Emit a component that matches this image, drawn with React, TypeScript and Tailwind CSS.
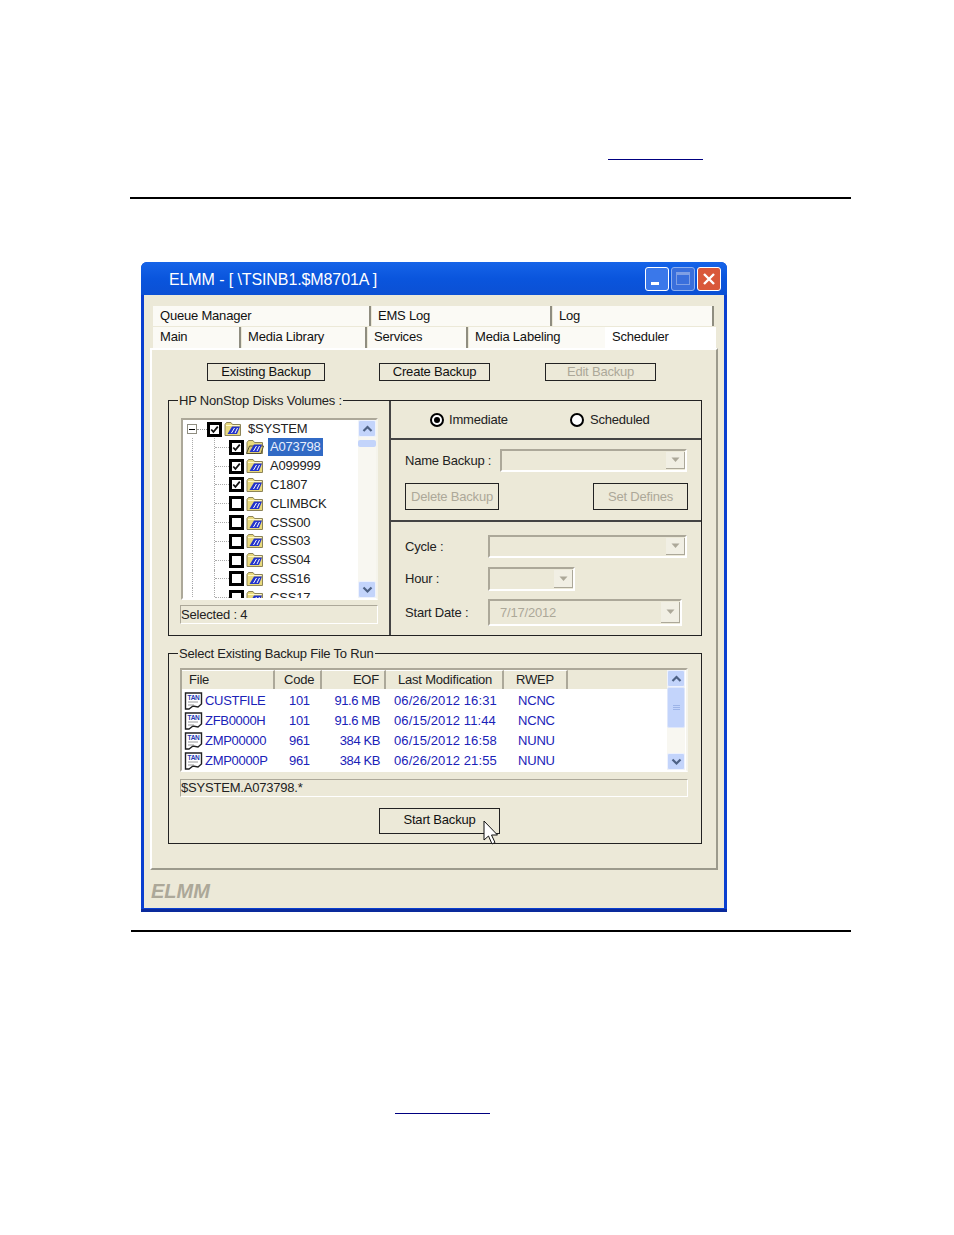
// App.tsx
// ELMM backup scheduler window, as shown on a scanned manual page.
const font = "font-['Liberation_Sans',Arial,sans-serif]";

const volumes = [
	{ name: "A073798", checked: true, selected: true },
	{ name: "A099999", checked: true },
	{ name: "C1807", checked: true },
	{ name: "CLIMBCK" },
	{ name: "CSS00" },
	{ name: "CSS03" },
	{ name: "CSS04" },
	{ name: "CSS16" },
	{ name: "CSS17" },
];

const files = [
	{ file: "CUSTFILE", code: "101", eof: "91.6 MB", date: "06/26/2012 16:31", rwep: "NCNC" },
	{ file: "ZFB0000H", code: "101", eof: "91.6 MB", date: "06/15/2012 11:44", rwep: "NCNC" },
	{ file: "ZMP00000", code: "961", eof: "384 KB", date: "06/15/2012 16:58", rwep: "NUNU" },
	{ file: "ZMP0000P", code: "961", eof: "384 KB", date: "06/26/2012 21:55", rwep: "NUNU" },
];

function Folder({ open }: { open?: boolean }) {
	return (
		<svg width="18" height="16" viewBox="0 0 18 16" className="shrink-0">
			<path d="M1 3.5 L2.5 1.5 H7 L8.5 3.5 H16.5 V14.5 H1 Z" fill="#e8d97c" stroke="#8d8458" strokeWidth="1" />
			{open ? (
				<path d="M0.5 14.5 L3.5 7 H17.5 L15 14.5 Z" fill="#dccb74" stroke="#555030" strokeWidth="1" />
			) : (
				<path d="M2 4.5 H15.5" stroke="#fff8c8" strokeWidth="1" />
			)}
			<path d="M3.5 13 L8 5.5 H16 L13 13 Z" fill="#2233cc" />
			<path d="M7.5 12 L10.5 7 M11 12 L13.5 7" stroke="#ffffff" strokeWidth="1" />
		</svg>
	);
}

function Check({ checked }: { checked?: boolean }) {
	return (
		<span className="w-[15px] h-[15px] border-[3px] border-black bg-white shrink-0 flex items-center justify-center">
			{checked && (
				<svg width="9" height="9" viewBox="0 0 11 11">
					<path d="M1.5 5.5 L4.2 8.5 L9.5 2" fill="none" stroke="#111" strokeWidth="2.2" />
				</svg>
			)}
		</span>
	);
}

function Chevron({ down }: { down?: boolean }) {
	return (
		<svg width="11" height="8" viewBox="0 0 11 8">
			<path d={down ? "M1.5 1.5 L5.5 5.5 L9.5 1.5" : "M1.5 6 L5.5 2 L9.5 6"} fill="none" stroke="#4d6185" strokeWidth="2.2" />
		</svg>
	);
}

function ScrollBtn({ down }: { down?: boolean }) {
	return (
		<div className="h-[17px] shrink-0 rounded-[2px] bg-[#c3d4fb] border border-[#eef2fd] flex items-center justify-center">
			<Chevron down={down} />
		</div>
	);
}

function Combo({ width, height, text }: { width: string; height: string; text?: string }) {
	return (
		<div className={`${width} ${height} flex border-2 border-t-[#aca899] border-l-[#aca899] border-r-white border-b-white`}>
			<span className="flex-1 pl-[10px] text-[13px] flex items-center text-[#aca899]">{text}</span>
			<span className="w-[19px] m-px mr-0 bg-[#f1efe4] border-r border-b border-[#aca899] flex items-center justify-center">
				<svg width="9" height="6" viewBox="0 0 9 6">
					<path d="M0.5 0.5 H8.5 L4.5 5 Z" fill="#aca899" />
				</svg>
			</span>
		</div>
	);
}

function Btn({ label, className, disabled }: { label: string; className: string; disabled?: boolean }) {
	return (
		<div
			className={`${className} shrink-0 border border-[#222] flex items-center justify-center text-[13px] tracking-[-0.2px] whitespace-nowrap ${
				disabled ? "text-[#aca899]" : "text-[#111]"
			}`}
		>
			{label}
		</div>
	);
}

function Radio({ on }: { on?: boolean }) {
	return (
		<span className="w-[14px] h-[14px] rounded-full border-2 border-black bg-white flex items-center justify-center shrink-0">
			{on && <span className="w-[6px] h-[6px] rounded-full bg-black" />}
		</span>
	);
}

function FileIcon() {
	return (
		<svg width="19" height="19" viewBox="0 0 19 19" className="shrink-0">
			<path d="M1.5 1 H17.5 V12 L14 15 L9 14 L5 17 H1.5 Z" fill="#fff" stroke="#222" strokeWidth="1.4" />
			<path d="M4 10 H14 M4 13 H10" stroke="#999" strokeWidth="1" />
			<text x="9.5" y="7.5" textAnchor="middle" fontSize="6.5" fontWeight="700" fill="#2438b0" fontFamily="Liberation Sans">
				TAN
			</text>
		</svg>
	);
}

function Th({ label, className }: { label: string; className: string }) {
	return (
		<div className={`${className} h-full shrink-0 flex items-center whitespace-nowrap border-r-2 border-r-[#aca899] border-t border-t-white text-[13px] tracking-[-0.2px] text-[#222]`}>
			{label}
		</div>
	);
}

export default function App() {
	return (
		<div className={`${font} w-[954px] h-[1235px] bg-white overflow-hidden`}>
			<div className="ml-[608px] pt-[159px]">
				<div className="w-[95px] h-px bg-[#000080]" />
			</div>
			<div className="ml-[130px] mt-[37px] w-[721px] h-[2px] bg-black" />

			{/* window */}
			<div className="ml-[141px] mt-[63px] w-[586px] h-[650px] flex flex-col rounded-t-[6px] bg-[#0a3fd0] border-b-[3px] border-b-[#0a2a9c] overflow-hidden">
				<div className="h-[33px] shrink-0 flex items-center pl-[28px] pr-[6px] bg-gradient-to-b from-[#1664e8] via-[#0a55dd] to-[#0b50d4]">
					<span className="flex-1 pt-[3px] text-[16px] tracking-[-0.1px] text-white">ELMM - [ \TSINB1.$M8701A ]</span>
					<div className="flex gap-[2px]">
						<span className="w-[24px] h-[24px] rounded-[3px] border border-white bg-[#3a78ea] flex items-end pl-[5px] pb-[5px]">
							<span className="w-[8px] h-[3px] bg-white" />
						</span>
						<span className="w-[24px] h-[24px] rounded-[3px] border border-[#8fb0ee] bg-[#3a6fdc] flex items-center justify-center">
							<span className="w-[14px] h-[13px] border border-[#7f9fe4] border-t-[3px]" />
						</span>
						<span className="w-[24px] h-[24px] rounded-[3px] border border-white bg-[#d9583a] flex items-center justify-center">
							<svg width="14" height="14" viewBox="0 0 14 14">
								<path d="M2 2 L12 12 M12 2 L2 12" stroke="#fff" strokeWidth="2.4" />
							</svg>
						</span>
					</div>
				</div>

				<div className="flex-1 mx-[3px] mb-[1px] bg-[#ece9d8] flex flex-col">
					{/* tabs */}
					<div className="ml-[9px] mt-[11px] w-[561px] h-[20px] flex text-[13px] tracking-[-0.2px] text-[#111] leading-[20px]">
						<div className="w-[218px] pl-[7px] bg-[#fbfaf5] border-r-2 border-[#8f8d80]">Queue Manager</div>
						<div className="w-[180px] ml-px pl-[6px] bg-[#fbfaf5] border-r-2 border-[#8f8d80]">EMS Log</div>
						<div className="flex-1 ml-px pl-[6px] bg-[#fbfaf5] border-r-2 border-[#8f8d80]">Log</div>
					</div>
					<div className="ml-[9px] mt-px w-[563px] h-[21px] flex text-[13px] tracking-[-0.2px] text-[#111] leading-[20px]">
						<div className="w-[88px] pl-[7px] bg-[#fbfaf5] border-r-2 border-[#8f8d80]">Main</div>
						<div className="w-[125px] ml-px pl-[6px] bg-[#fbfaf5] border-r-2 border-[#8f8d80]">Media Library</div>
						<div className="w-[100px] ml-px pl-[6px] bg-[#fbfaf5] border-r-2 border-[#8f8d80]">Services</div>
						<div className="w-[136px] ml-px pl-[6px] bg-[#fbfaf5]">Media Labeling</div>
						<div className="flex-1 pl-[7px] bg-white">Scheduler</div>
					</div>

					{/* tab panel */}
					<div className="ml-[6px] w-[568px] h-[522px] shrink-0 border-l-2 border-t-2 border-l-white border-t-white border-r-2 border-b-2 border-r-[#9c9a8c] border-b-[#9c9a8c] flex flex-col">
						<div className="flex mt-[13px] h-[18px]">
							<Btn label="Existing Backup" className="ml-[55px] w-[118px]" />
							<Btn label="Create Backup" className="ml-[54px] w-[111px]" />
							<Btn label="Edit Backup" disabled className="ml-[55px] w-[111px]" />
						</div>

						{/* volumes + options */}
						<div className="ml-[16px] mt-[19px] w-[534px] h-[236px] shrink-0 border border-[#222] flex">
							<div className="w-[222px] shrink-0 border-r-2 border-[#444]">
								<div className="-mt-[9px] ml-[9px] w-fit px-px bg-[#ece9d8] text-[13px] tracking-[-0.2px] leading-[17px] text-[#222]">
									HP NonStop Disks Volumes :
								</div>
								<div className="ml-[12px] mt-[9px] w-[197px] h-[182px] border-2 border-t-[#aca899] border-l-[#aca899] border-r-[#f5f4ec] border-b-white bg-white flex overflow-hidden">
									<div className="flex-1 overflow-hidden text-[13px] tracking-[-0.2px] text-[#222]">
										<div className="h-[18px] flex items-center pl-[4px]">
											<span className="w-[10px] h-[10px] border border-[#8f8d80] flex items-center justify-center shrink-0">
												<span className="w-[6px] h-px bg-black" />
											</span>
											<span className="w-[10px] border-t border-dotted border-[#999]" />
											<Check checked />
											<span className="ml-[2px]">
												<Folder />
											</span>
											<span className="ml-[6px]">$SYSTEM</span>
										</div>
										{volumes.map((v) => (
											<div key={v.name} className="h-[18.8px] flex items-center pl-[9px]">
												<span className="w-[22px] h-full border-l border-dotted border-[#aaa] shrink-0" />
												<span className="w-[15px] h-full border-l border-dotted border-[#aaa] shrink-0 flex items-center">
													<span className="w-full border-t border-dotted border-[#aaa]" />
												</span>
												<Check checked={v.checked} />
												<span className="ml-[2px]">
													<Folder open={v.selected} />
												</span>
												<span className={`ml-[4px] px-[2px] leading-[18px] ${v.selected ? "bg-[#316ac5] text-[#e8eefc]" : ""}`}>
													{v.name}
												</span>
											</div>
										))}
									</div>
									<div className="w-[18px] shrink-0 flex flex-col bg-[#f8f7f1]">
										<ScrollBtn />
										<div className="mt-[3px] h-[7px] bg-[#c3d4fb] rounded-[2px]" />
										<div className="flex-1" />
										<ScrollBtn down />
									</div>
								</div>
								<div className="ml-[11px] mt-[5px] w-[198px] h-[19px] border border-t-[#aca899] border-l-[#aca899] border-r-white border-b-white text-[13px] tracking-[-0.2px] leading-[17px] text-[#222]">
									Selected : 4
								</div>
							</div>
							<div className="flex-1 flex flex-col text-[13px] tracking-[-0.2px] text-[#222]">
								<div className="h-[39px] shrink-0 border-b-2 border-[#444] flex items-center pt-[1px]">
									<span className="ml-[39px]">
										<Radio on />
									</span>
									<span className="ml-[5px] w-[121px]">Immediate</span>
									<Radio />
									<span className="ml-[6px]">Scheduled</span>
								</div>
								<div className="h-[82px] shrink-0 border-b-2 border-[#444] flex flex-col">
									<div className="mt-[9px] flex items-center">
										<span className="ml-[14px] w-[95px] shrink-0">Name Backup :</span>
										<Combo width="w-[187px]" height="h-[23px]" />
									</div>
									<div className="mt-[11px] flex">
										<Btn label="Delete Backup" disabled className="ml-[14px] w-[94px] h-[27px]" />
										<Btn label="Set Defines" disabled className="ml-[94px] w-[95px] h-[27px]" />
									</div>
								</div>
								<div className="flex-1 flex flex-col">
									<div className="mt-[13px] flex items-center">
										<span className="ml-[14px] w-[83px] shrink-0">Cycle :</span>
										<Combo width="w-[199px]" height="h-[23px]" />
									</div>
									<div className="mt-[9px] flex items-center">
										<span className="ml-[14px] w-[83px] shrink-0">Hour :</span>
										<Combo width="w-[87px]" height="h-[24px]" />
									</div>
									<div className="mt-[8px] flex items-center">
										<span className="ml-[14px] w-[83px] shrink-0">Start Date :</span>
										<Combo width="w-[194px]" height="h-[27px]" text="7/17/2012" />
									</div>
								</div>
							</div>
						</div>

						{/* backup file list */}
						<div className="ml-[16px] mt-[17px] w-[534px] h-[191px] shrink-0 border border-[#222] relative">
							<div className="-mt-[9px] ml-[9px] w-fit px-px bg-[#ece9d8] text-[13px] tracking-[-0.2px] leading-[17px] text-[#222]">
								Select Existing Backup File To Run
							</div>
							<div className="ml-[11px] mt-[6px] w-[508px] h-[104px] pr-px border-2 border-t-[#aca899] border-l-[#aca899] border-r-[#f5f4ec] border-b-white bg-white flex">
								<div className="flex-1 min-w-0">
									<div className="h-[19px] flex bg-[#ece9d8]">
										<Th label="File" className="w-[93px] pl-[7px]" />
										<Th label="Code" className="w-[47px] pl-[9px]" />
										<Th label="EOF" className="w-[64px] justify-end pr-[5px]" />
										<Th label="Last Modification" className="w-[118px] pl-[12px]" />
										<Th label="RWEP" className="w-[64px] pl-[12px]" />
									</div>
									<div className="pt-[2px] text-[13px] text-[#1a22b8]">
										{files.map((f) => (
											<div key={f.file} className="h-[20px] flex items-center">
												<div className="w-[93px] pl-[2px] flex items-center gap-[2px] shrink-0 tracking-[-0.3px]">
													<FileIcon />
													{f.file}
												</div>
												<div className="w-[47px] pl-[14px] shrink-0 tracking-[-0.3px]">{f.code}</div>
												<div className="w-[64px] text-right pr-[6px] shrink-0 tracking-[-0.4px]">{f.eof}</div>
												<div className="w-[118px] pl-[8px] shrink-0 whitespace-nowrap tracking-[0.1px]">{f.date}</div>
												<div className="w-[64px] pl-[14px] shrink-0 tracking-[-0.2px]">{f.rwep}</div>
											</div>
										))}
									</div>
								</div>
								<div className="w-[18px] shrink-0 flex flex-col bg-[#f8f7f1]">
									<ScrollBtn />
									<div className="h-[41px] bg-[#c3d4fb] rounded-[2px] border border-[#dfe7fb] flex flex-col items-center justify-center gap-px">
										<span className="w-[7px] h-px bg-[#9db4e8]" />
										<span className="w-[7px] h-px bg-[#9db4e8]" />
										<span className="w-[7px] h-px bg-[#9db4e8]" />
									</div>
									<div className="flex-1" />
									<ScrollBtn down />
								</div>
							</div>
							<div className="ml-[11px] mt-[7px] w-[508px] h-[18px] border border-t-[#aca899] border-l-[#aca899] border-r-white border-b-white text-[13px] tracking-[-0.2px] leading-[16px] text-[#222]">
								$SYSTEM.A073798.*
							</div>
							<div className="ml-[210px] mt-[11px] w-[121px] h-[26px] relative">
								<Btn label="Start Backup" className="w-full h-full pb-[2px]" />
								<svg width="18" height="26" viewBox="0 0 18 26" className="absolute left-[104px] top-[12px]">
									<path d="M1 1 V20 L5.5 16 L9 24 L12 22.5 L8.5 15 H14.5 Z" fill="#fff" stroke="#111" strokeWidth="1" />
								</svg>
							</div>
						</div>
					</div>

					<div className="ml-[7px] mt-[9px] text-[20px] leading-[24px] font-bold italic text-[#aca899]">ELMM</div>
				</div>
			</div>

			<div className="ml-[131px] mt-[18px] w-[720px] h-[2px] bg-black" />
			<div className="ml-[395px] mt-[181px] w-[95px] h-px bg-[#000080]" />
		</div>
	);
}
